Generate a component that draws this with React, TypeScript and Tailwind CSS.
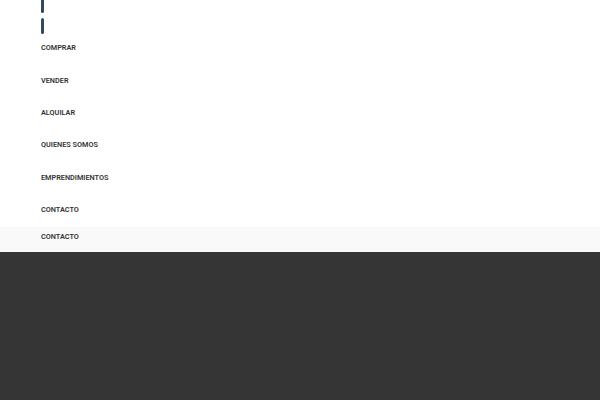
export default function App() {
  const items = ['COMPRAR', 'VENDER', 'ALQUILAR', 'QUIENES SOMOS', 'EMPRENDIMIENTOS', 'CONTACTO'];

  return (
    <div className="w-[600px] h-[400px] flex flex-col bg-white overflow-hidden" style={{ fontFamily: 'Roboto, "Liberation Sans", sans-serif' }}>
      {/* menu panel */}
      <div className="bg-white pl-[41px] h-[227px] shrink-0">
        <div className="h-[32.5px] flex flex-col gap-[5px]">
          <span className="block w-[3px] h-[13px] rounded-b-sm bg-[#34495e] shrink-0" />
          <span className="block w-[3px] h-[16px] rounded-sm bg-[#34495e] shrink-0" />
        </div>
        <ul>
          {items.map((item) => (
            <li key={item} className="h-[32.4px] flex items-center">
              <a className="text-[7.3px] font-semibold text-[#333]">{item}</a>
            </li>
          ))}
        </ul>
      </div>
      <div className="h-[25px] shrink-0 bg-[#f9f9f9] pl-[41px] pt-[5px]">
        <a className="block text-[7.3px] leading-[10px] font-semibold text-[#333]">CONTACTO</a>
      </div>
      <div className="flex-1 bg-[#353535]" />
    </div>
  );
}
